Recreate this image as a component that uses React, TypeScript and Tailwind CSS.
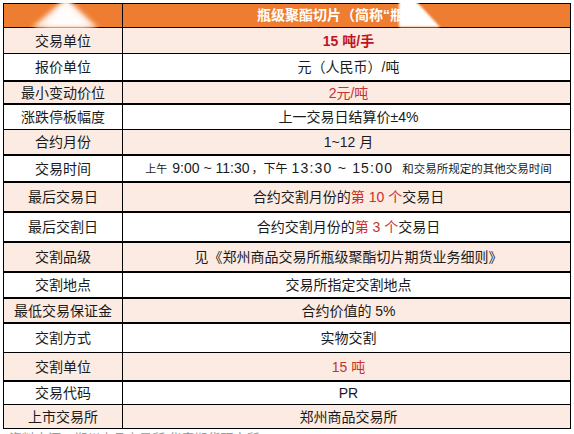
import React from "react";

type Row = { label: string; value: React.ReactNode; h: number; thick: boolean; pink: boolean };

const R = ({ children, b }: { children: React.ReactNode; b?: boolean }) => (
  <span className={b ? "text-[#c0141e] font-bold" : "text-[#c8312c]"}>{children}</span>
);

const TradeTime = () => (
  <span className="whitespace-nowrap">
    <span className="text-[11px]">上午</span>
    <span className="ml-[5px] text-[14px]">9:00 ~ 11:30</span>
    <span className="ml-[2px] mr-[4px] text-[12px]">，下午</span>
    <span className="text-[14px] tracking-[1.2px]">13:30 ~ 15:00</span>
    <span className="ml-[9px] text-[11.5px]">和交易所规定的其他交易时间</span>
  </span>
);

const rows: Row[] = [
  { label: "交易单位", value: <R b>15 吨/手</R>, h: 26, thick: false, pink: true },
  { label: "报价单位", value: "元（人民币）/吨", h: 27, thick: false, pink: false },
  { label: "最小变动价位", value: <R>2元/吨</R>, h: 23, thick: true, pink: true },
  { label: "涨跌停板幅度", value: "上一交易日结算价±4%", h: 26, thick: true, pink: false },
  { label: "合约月份", value: "1~12 月", h: 25, thick: false, pink: true },
  { label: "交易时间", value: <TradeTime />, h: 27, thick: true, pink: false },
  {
    label: "最后交易日",
    value: (
      <>
        合约交割月份的<R>第 10 个</R>交易日
      </>
    ),
    h: 30,
    thick: true,
    pink: true,
  },
  {
    label: "最后交割日",
    value: (
      <>
        合约交割月份的<R>第 3 个</R>交易日
      </>
    ),
    h: 30,
    thick: true,
    pink: false,
  },
  { label: "交割品级", value: "见《郑州商品交易所瓶级聚酯切片期货业务细则》", h: 30, thick: true, pink: true },
  { label: "交割地点", value: "交易所指定交割地点", h: 26, thick: true, pink: false },
  { label: "最低交易保证金", value: "合约价值的 5%", h: 25, thick: true, pink: true },
  { label: "交割方式", value: "实物交割", h: 30, thick: true, pink: false },
  { label: "交割单位", value: <R>15 吨</R>, h: 28, thick: false, pink: true },
  { label: "交易代码", value: "PR", h: 24, thick: true, pink: false },
  { label: "上市交易所", value: "郑州商品交易所", h: 24, thick: false, pink: true },
];

export default function App() {
  return (
    <div className="relative w-[574px] h-[434px] overflow-hidden bg-white font-['Liberation_Sans','Noto_Sans_CJK_SC',sans-serif] text-[#1a1a1a]">
      <div className="pt-[3px] pl-[3px]">
        <div className="w-[568px] border-l border-r border-b border-black">
          <div className="flex h-[24px] border-t border-black bg-[#ee7d31]">
            <div className="w-[119px] border-r border-black" />
            <div className="flex-1 flex items-center pl-[134px] text-white font-bold text-[14px] whitespace-nowrap overflow-hidden">
              瓶级聚酯切片（简称“瓶
            </div>
          </div>
          {rows.map((r, i) => (
            <div
              key={i}
              className={`flex box-border ${r.thick ? "border-t-2" : "border-t"} border-black ${
                r.pink ? "bg-[#fcebe3]" : "bg-white"
              }`}
              style={{ height: r.h }}
            >
              <div className="w-[119px] shrink-0 border-r border-black flex items-center justify-center text-[14px] whitespace-nowrap leading-none">
                {r.label}
              </div>
              <div className="flex-1 flex items-center justify-center whitespace-nowrap leading-none text-[14px] pl-[4px]">
                <span>{r.value}</span>
              </div>
            </div>
          ))}
        </div>
        <div className="mt-[3px] pl-[6px] text-[13px] text-[#999] leading-none whitespace-nowrap">
          资料来源：郑州商品交易所 华泰期货研究所
        </div>
      </div>
      <svg className="absolute left-0 top-0 pointer-events-none" width="574" height="30" viewBox="0 0 574 30">
        <defs>
          <filter id="bl" x="-50%" y="-50%" width="200%" height="200%">
            <feGaussianBlur stdDeviation="2.5" />
          </filter>
          <filter id="bl2" x="-50%" y="-50%" width="200%" height="200%">
            <feGaussianBlur stdDeviation="0.8" />
          </filter>
        </defs>
        <polygon points="66,-2 98,28 32,28" fill="#fff5f0" opacity="0.95" filter="url(#bl)" />
        <polygon points="66,2 88,26 44,26" fill="#ffffff" opacity="0.9" filter="url(#bl)" />
        <polygon points="399,-2 413,-2 440,27 399,27" fill="#ffffff" filter="url(#bl2)" />
      </svg>
    </div>
  );
}
